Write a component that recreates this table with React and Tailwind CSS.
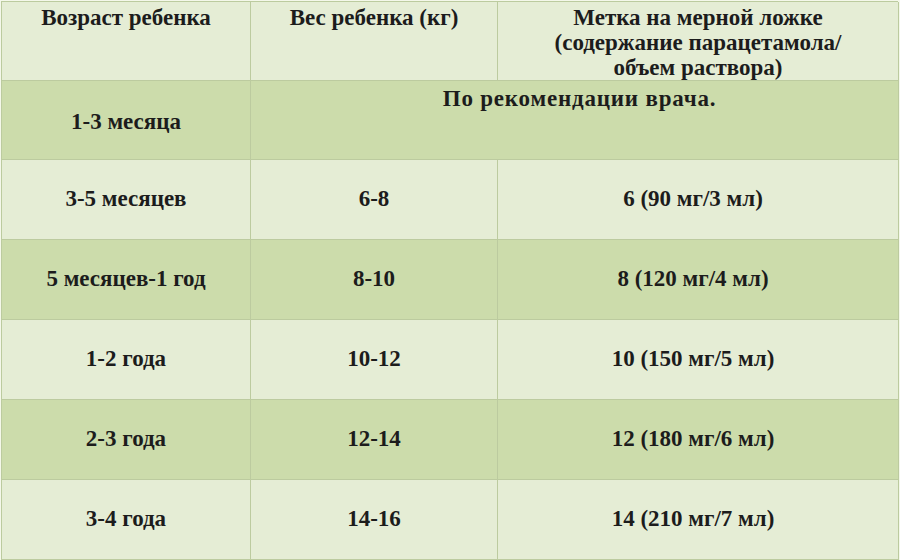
const rows = [
  { age: "3-5 месяцев", weight: "6-8", dose: "6 (90 мг/3 мл)", dark: false },
  { age: "5 месяцев-1 год", weight: "8-10", dose: "8 (120 мг/4 мл)", dark: true },
  { age: "1-2 года", weight: "10-12", dose: "10 (150 мг/5 мл)", dark: false },
  { age: "2-3 года", weight: "12-14", dose: "12 (180 мг/6 мл)", dark: true },
  { age: "3-4 года", weight: "14-16", dose: "14 (210 мг/7 мл)", dark: false },
];

const cell = "flex items-center justify-center border-r border-b border-[#bccb9f]";

export default function App() {
  return (
    <div className="w-[900px] h-[560px] overflow-hidden bg-[#f4f8ea] pl-[1px] pt-[1px] font-['Liberation_Serif'] text-[23px] font-bold text-[#1c1c1c]">
      <div className="grid w-[897px] grid-cols-[249px_247px_401px] border-l border-t border-[#bccb9f]">
        {/* header */}
        <div className="h-[79px] border-r border-b border-[#bccb9f] bg-[#e5edd5] pt-[3px] text-center leading-[25px]">
          Возраст ребенка
        </div>
        <div className="h-[79px] border-r border-b border-[#bccb9f] bg-[#e5edd5] pt-[3px] text-center leading-[25px]">
          Вес ребенка (кг)
        </div>
        <div className="h-[79px] border-r border-b border-[#bccb9f] bg-[#e5edd5] pt-[3px] text-center leading-[25px]">
          Метка на мерной ложке
          <br />
          (содержание парацетамола/
          <br />
          объем раствора)
        </div>

        {/* doctor row */}
        <div className={`${cell} h-[79px] bg-[#ccdcab] pt-[4px]`}>1-3 месяца</div>
        <div className="col-span-2 h-[79px] border-r border-b border-[#bccb9f] bg-[#ccdcab] pt-[5px] pl-[10px] text-center leading-[25px] tracking-[0.8px]">
          По рекомендации врача.
        </div>

        {rows.map((r) => {
          const bg = r.dark ? "bg-[#ccdcab]" : "bg-[#e5edd5]";
          return [
            <div key={r.age + "a"} className={`${cell} h-[80px] ${bg}`}>
              {r.age}
            </div>,
            <div key={r.age + "w"} className={`${cell} h-[80px] ${bg}`}>
              {r.weight}
            </div>,
            <div key={r.age + "d"} className={`${cell} h-[80px] ${bg} pr-[10px]`}>
              {r.dose}
            </div>,
          ];
        })}

        <div className={`${cell} h-[20px] bg-[#ccdcab]`}></div>
        <div className={`${cell} h-[20px] bg-[#ccdcab]`}></div>
        <div className={`${cell} h-[20px] bg-[#ccdcab]`}></div>
      </div>
    </div>
  );
}
